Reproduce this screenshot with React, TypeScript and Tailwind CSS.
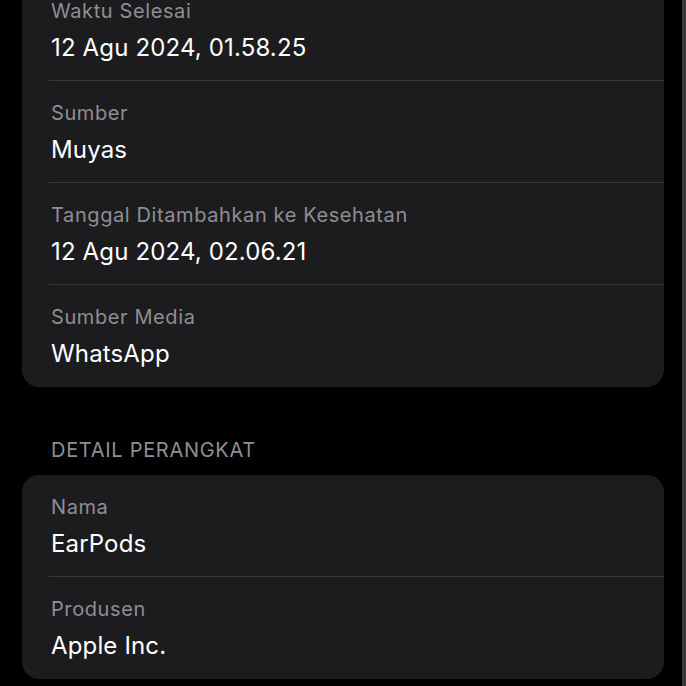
import React from 'react'

type Item = { label: string; value: string }

const sumberItems: Item[] = [
  { label: 'Waktu Selesai', value: '12 Agu 2024, 01.58.25' },
  { label: 'Sumber', value: 'Muyas' },
  { label: 'Tanggal Ditambahkan ke Kesehatan', value: '12 Agu 2024, 02.06.21' },
  { label: 'Sumber Media', value: 'WhatsApp' },
]

const perangkatItems: Item[] = [
  { label: 'Nama', value: 'EarPods' },
  { label: 'Produsen', value: 'Apple Inc.' },
]

function Row({ item, last }: { item: Item; last: boolean }) {
  return (
    <div className="pl-[27px]">
      <div className={`h-[102px] pt-[20px] ${last ? '' : 'border-b border-[#38383a]'}`}>
        <div className="text-[20px] leading-[24px] tracking-[0.6px] text-[#8e8e93] pl-[2px]">{item.label}</div>
        <div className="mt-[11px] text-[24px] leading-[28px] tracking-[0.15px] text-white pl-[2px]">{item.value}</div>
      </div>
    </div>
  )
}

function Card({ items }: { items: Item[] }) {
  return (
    <div className="rounded-[17px] bg-[#1c1c1e] overflow-hidden">
      {items.map((it, i) => (
        <Row key={it.label} item={it} last={i === items.length - 1} />
      ))}
    </div>
  )
}

export default function App() {
  return (
    <div
      className="relative h-[686px] w-[686px] overflow-hidden bg-black"
      style={{ fontFamily: "Inter, 'Noto Sans', sans-serif" }}
    >
      <div className="px-[22px] -mt-[21px]">
        <Card items={sumberItems} />
        <div className="pt-[51px] pb-[13px] pl-[29px] text-[20px] leading-[24px] tracking-[0.7px] text-[#8e8e93]">
          DETAIL PERANGKAT
        </div>
        <Card items={perangkatItems} />
      </div>
      <div className="absolute right-0 top-0 h-full w-[4px] bg-[#3a3a3c]" />
    </div>
  )
}
